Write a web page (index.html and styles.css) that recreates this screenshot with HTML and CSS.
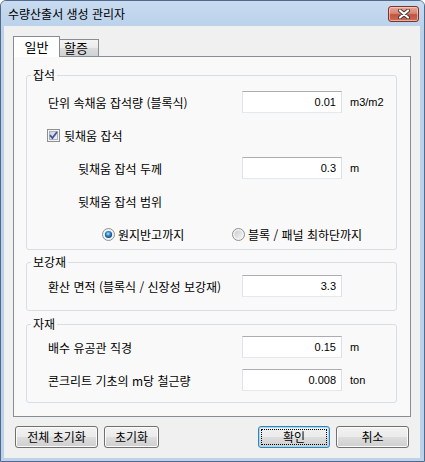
FILE: index.html
```html
<!DOCTYPE html>
<html lang="ko">
<head>
    <meta charset="UTF-8">
    <title>수량산출서 생성 관리자</title>
    <link rel="stylesheet" href="styles.css">
</head>
<body>
    <div class="window">
        <div class="titlebar">
            <span class="title">수량산출서 생성 관리자</span>
            <button class="close-btn">
                <svg width="14" height="10" viewBox="0 0 14 10">
                    <path d="M3 1.5 L11 8.5 M11 1.5 L3 8.5" stroke="#3a3a3a" stroke-width="4" stroke-linecap="round"/>
                    <path d="M3 1.5 L11 8.5 M11 1.5 L3 8.5" stroke="#ffffff" stroke-width="2.2" stroke-linecap="round"/>
                </svg>
            </button>
        </div>
        <div class="client">
            <div class="tabs">
                <div class="tab active">일반</div>
                <div class="tab">할증</div>
            </div>
            <div class="tab-panel">
                <fieldset class="group group-stone">
                    <legend>잡석</legend>
                    <div class="row">
                        <span class="label">단위 속채움 잡석량 (블록식)</span>
                        <input class="num" type="text" value="0.01">
                        <span class="unit">m3/m2</span>
                    </div>
                    <div class="row check-row">
                        <span class="checkbox">
                            <svg width="13" height="13" viewBox="0 0 13 13">
                                <defs>
                                    <linearGradient id="cbFill" x1="0" y1="0" x2="1" y2="1">
                                        <stop offset="0" stop-color="#cbcfd5"/>
                                        <stop offset="1" stop-color="#f6f6f6"/>
                                    </linearGradient>
                                </defs>
                                <rect x="0.5" y="0.5" width="12" height="12" fill="#f4f4f4" stroke="#8e8f8f"/>
                                <rect x="2.5" y="2.5" width="8" height="8" fill="url(#cbFill)" stroke="#aeb3b9"/>
                                <path d="M3 6.2 L5.4 9 L10 3" fill="none" stroke="#3e57a0" stroke-width="1.8"/>
                            </svg>
                        </span>
                        <span>뒷채움 잡석</span>
                    </div>
                    <div class="row">
                        <span class="label indent">뒷채움 잡석 두께</span>
                        <input class="num" type="text" value="0.3">
                        <span class="unit">m</span>
                    </div>
                    <div class="row">
                        <span class="label indent">뒷채움 잡석 범위</span>
                    </div>
                    <div class="row radio-row">
                        <span class="radio-option">
                            <svg width="13" height="13" viewBox="0 0 13 13">
                                <defs>
                                    <radialGradient id="dotOn" cx="0.45" cy="0.4" r="0.6">
                                        <stop offset="0" stop-color="#b8e6fb"/>
                                        <stop offset="0.5" stop-color="#2d86c8"/>
                                        <stop offset="1" stop-color="#0f3f78"/>
                                    </radialGradient>
                                </defs>
                                <circle cx="6.5" cy="6.5" r="6" fill="#f2f2f2" stroke="#8e8f8f"/>
                                <circle cx="6.5" cy="6.5" r="3.6" fill="url(#dotOn)"/>
                            </svg>
                            <span>원지반고까지</span>
                        </span>
                        <span class="radio-option">
                            <svg width="13" height="13" viewBox="0 0 13 13">
                                <defs>
                                    <linearGradient id="dotOff" x1="0" y1="0" x2="1" y2="1">
                                        <stop offset="0" stop-color="#c9ccd1"/>
                                        <stop offset="1" stop-color="#f5f5f5"/>
                                    </linearGradient>
                                </defs>
                                <circle cx="6.5" cy="6.5" r="6" fill="#f2f2f2" stroke="#8e8f8f"/>
                                <circle cx="6.5" cy="6.5" r="4" fill="url(#dotOff)"/>
                            </svg>
                            <span>블록 / 패널 최하단까지</span>
                        </span>
                    </div>
                </fieldset>

                <fieldset class="group group-rebar">
                    <legend>보강재</legend>
                    <div class="row">
                        <span class="label">환산 면적 (블록식 / 신장성 보강재)</span>
                        <input class="num" type="text" value="3.3">
                    </div>
                </fieldset>

                <fieldset class="group group-material">
                    <legend>자재</legend>
                    <div class="row">
                        <span class="label">배수 유공관 직경</span>
                        <input class="num" type="text" value="0.15">
                        <span class="unit">m</span>
                    </div>
                    <div class="row">
                        <span class="label">콘크리트 기초의 m당 철근량</span>
                        <input class="num" type="text" value="0.008">
                        <span class="unit">ton</span>
                    </div>
                </fieldset>
            </div>
            <div class="footer">
                <button class="btn btn-reset-all">전체 초기화</button>
                <button class="btn btn-reset">초기화</button>
                <span class="spacer"></span>
                <button class="btn btn-ok">확인</button>
                <button class="btn btn-cancel">취소</button>
            </div>
        </div>
    </div>
</body>
</html>
```

FILE: styles.css
```css
* {
    box-sizing: border-box;
}
body {
    margin: 0;
    font-family: "Noto Sans CJK KR", sans-serif;
    font-size: 12px;
    color: #000;
    background: #ffffff;
}
.window {
    width: 425px;
    height: 462px;
    border: 1px solid #52698a;
    border-radius: 6px 6px 0 0;
    background: #bcd2ea;
    padding: 0 4px 3px 3px;
    display: flex;
    flex-direction: column;
}
.titlebar {
    height: 25px;
    display: flex;
    align-items: center;
    padding-left: 4px;
    background: linear-gradient(#c8dbf0, #bbd2eb);
    margin: 0 -4px 0 -3px;
    padding: 0 5px 0 7px;
    border-radius: 5px 5px 0 0;
}
.title {
    flex: 1;
    line-height: 14px;
    color: #000;
}
.close-btn {
    width: 31px;
    height: 16px;
    padding: 0;
    border: 1px solid #7e3226;
    border-radius: 3px;
    background: linear-gradient(#e8a597 0%, #d98574 45%, #c2533f 55%, #cd6b57 100%);
    box-shadow: inset 0 0 0 1px rgba(255, 220, 210, 0.6);
    display: flex;
    align-items: center;
    justify-content: center;
}
.client {
    flex: 1;
    background: #f0f0f0;
    padding: 10px 9px 0 9px;
}
.tabs {
    display: flex;
    align-items: flex-end;
    height: 20px;
}
.tab {
    font-size: 13px;
    line-height: 15px;
    border: 1px solid #898c95;
    border-bottom: none;
}
.tab.active {
    position: relative;
    z-index: 1;
    width: 47px;
    height: 21px;
    margin-bottom: -1px;
    padding-top: 2px;
    text-align: center;
    background: #ffffff;
}
.tab:not(.active) {
    width: 40px;
    height: 17px;
    margin-left: -1px;
    padding-left: 4px;
    background: linear-gradient(#f3f3f3 0%, #ebebeb 50%, #dcdcdc 51%, #cfd1d4 100%);
}
.tab-panel {
    height: 361px;
    border: 1px solid #898c95;
    background: #f9f9f9;
    padding: 11px 13px 0 12px;
}
.group {
    margin: 0;
    padding: 0;
    border: 1px solid #d5dfe5;
    border-radius: 3px;
    display: flex;
    flex-direction: column;
}
.group legend {
    margin-left: 4px;
    padding: 0 2px;
    line-height: 14px;
}
.group-stone {
    padding: 9px 0 4px;
    gap: 11px;
}
.group-rebar {
    margin-top: 5px;
    padding: 6px 0 13px;
}
.group-material {
    margin-top: 6px;
    padding: 5px 0 11px;
    gap: 11px;
}
.row {
    display: grid;
    grid-template-columns: 194px 100px auto;
    align-items: center;
    height: 22px;
    padding-left: 21px;
}
.label.indent {
    padding-left: 30px;
}
.num {
    width: 100px;
    height: 22px;
    margin: 0;
    padding: 0 5px 1px 0;
    border: 1px solid;
    border-color: #abadb3 #dbdfe6 #e3e9ef #e2e3ea;
    background: #fff;
    text-align: right;
    font-family: "Liberation Sans", Arial, sans-serif;
    font-size: 11px;
    color: #000;
}
.unit {
    margin-left: 8px;
    font-family: "Liberation Sans", Arial, sans-serif;
    font-size: 11px;
}
.check-row {
    display: flex;
    gap: 4px;
    padding-left: 20px;
}
.checkbox,
.radio-option svg {
    display: block;
}
.checkbox svg {
    display: block;
}
.radio-row {
    grid-template-columns: 130px auto;
    padding-left: 75px;
}
.radio-option {
    display: flex;
    align-items: center;
    gap: 3px;
}
.footer {
    display: flex;
    gap: 6px;
    margin-top: 9px;
    padding: 0 2px;
}
.spacer {
    flex: 1;
}
.btn {
    height: 22px;
    padding: 0;
    border: 1px solid #707070;
    border-radius: 3px;
    background: linear-gradient(#f2f2f2 0%, #ebebeb 48%, #dddddd 52%, #cfcfcf 100%);
    box-shadow: inset 0 0 0 1px #fcfcfc;
    font-family: "Noto Sans CJK KR", sans-serif;
    font-size: 12px;
    line-height: 14px;
    color: #000;
}
.btn-reset-all {
    width: 83px;
}
.btn-reset {
    width: 55px;
}
.btn-ok {
    width: 72px;
    border-color: #3c7fb1;
    box-shadow: inset 0 0 0 1px #9fdcf7;
    outline: 1px dotted #000;
    outline-offset: -4px;
}
.btn-cancel {
    width: 73px;
}
```
